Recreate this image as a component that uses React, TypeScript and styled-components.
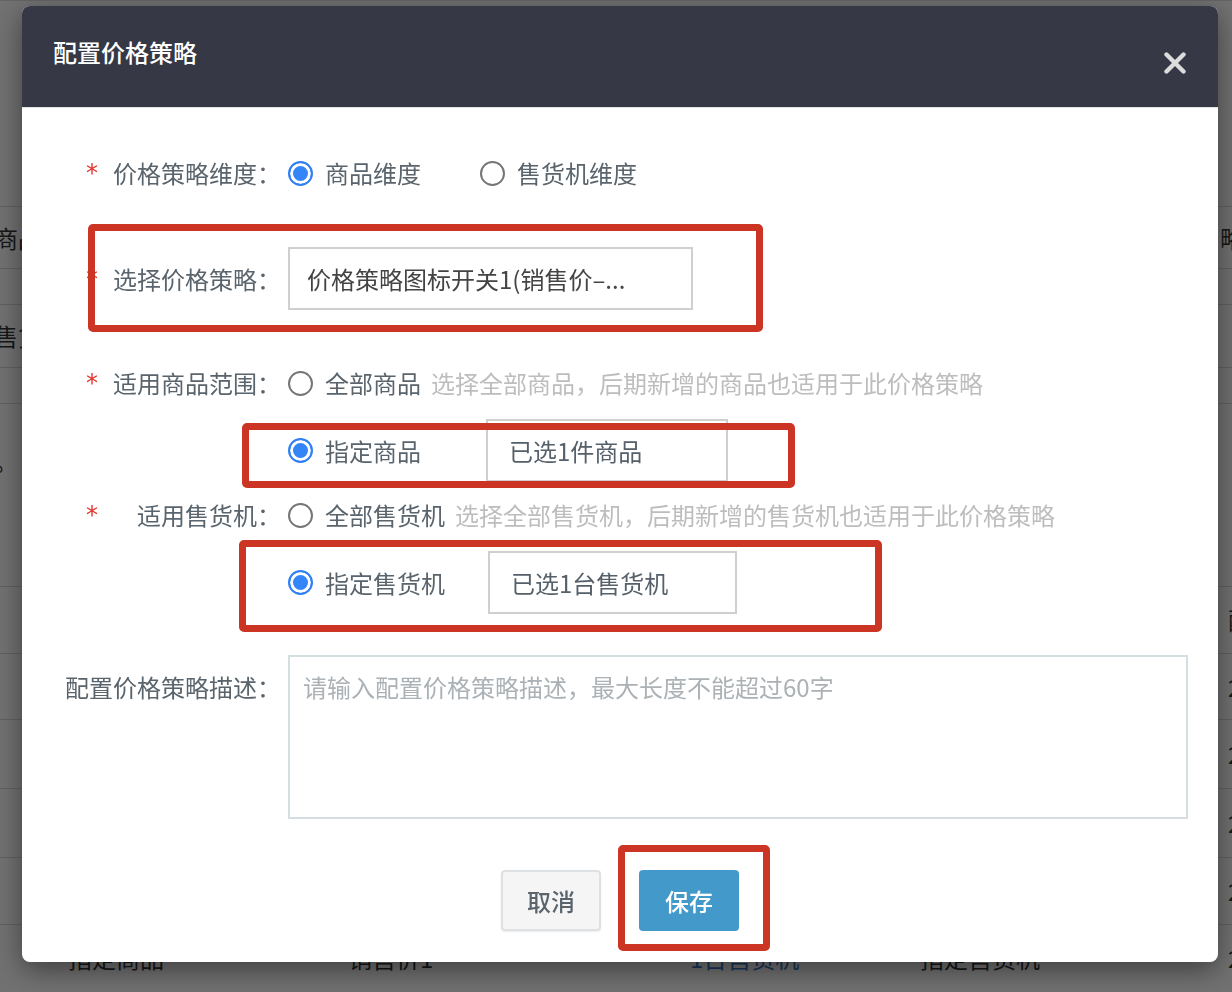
import React from "react";
import styled, { createGlobalStyle } from "styled-components";

interface RowProps {
  top: number
  height: number
  align?: string
}

interface WidthProps {
  width: number
}

interface BoxProps {
  left: number
  top: number
  width: number
  height: number
}

interface RadioProps {
  checked?: boolean
}

const GlobalStyle = createGlobalStyle`
  html, body {
    margin: 0;
    padding: 0;
  }
  body {
    width: 1232px;
    height: 992px;
    overflow: hidden;
    background: #fafafa;
    font-family: "Noto Sans CJK SC", "Noto Sans", sans-serif;
  }
  * {
    box-sizing: border-box;
  }
`;

const BG_ROWS = [
  { height: 62, left: "商品", right: "略" },
  { height: 36 },
  { height: 63, left: "售货" },
  { height: 36 },
  { height: 183, left: "。", top: true },
  { height: 67, tail: "配" },
  { height: 66, tail: "2" },
  { height: 69, tail: "2" },
  { height: 69, tail: "2" },
  { height: 67, tail: "2" },
  { height: 66, cells: ["指定商品", "销售价1", "1台售货机", "指定售货机"], tail: "2" },
];

const App: React.FC = (): React.ReactElement => {
  return (
    <>
      <GlobalStyle />
      <BackPage>
        {BG_ROWS.map((row, i) => (
          <BgRow key={i} height={row.height} top={row.top}>
            <BgLeft>{row.left}</BgLeft>
            {row.cells ? (
              <>
                <BgCell>{row.cells[0]}</BgCell>
                <BgCell>{row.cells[1]}</BgCell>
                <BgLink>{row.cells[2]}</BgLink>
                <BgCell>{row.cells[3]}</BgCell>
              </>
            ) : (
              <>
                <BgCell />
                <BgCell />
                <BgCell />
                <BgCell />
              </>
            )}
            <BgCell>{row.right}</BgCell>
            <BgTail>{row.tail}</BgTail>
          </BgRow>
        ))}
      </BackPage>

      <Overlay>
        <Modal>
          <ModalHeader>
            <ModalTitle>配置价格策略</ModalTitle>
            <CloseButton aria-label="关闭">
              <svg width="22" height="22" viewBox="0 0 22 22">
                <path d="M2.5 2.5 L19.5 19.5 M19.5 2.5 L2.5 19.5" stroke="#dcdcdc" strokeWidth="4.4" strokeLinecap="round" />
              </svg>
            </CloseButton>
          </ModalHeader>

          <ModalBody>
            <FormRow top={40} height={50}>
              <LabelCell>
                <Star>*</Star>
                <LabelText>价格策略维度：</LabelText>
              </LabelCell>
              <Field>
                <RadioOption width={192}>
                  <Radio checked />
                  <OptionText>商品维度</OptionText>
                </RadioOption>
                <RadioOption width={192}>
                  <Radio />
                  <OptionText>售货机维度</OptionText>
                </RadioOption>
              </Field>
            </FormRow>

            <FormRow top={49} height={63}>
              <LabelCell>
                <Star>*</Star>
                <LabelText>选择价格策略：</LabelText>
              </LabelCell>
              <Field>
                <SelectBox width={405}>
                  <SelectValue>价格策略图标开关1(销售价–...</SelectValue>
                </SelectBox>
              </Field>
              <Mark left={66} top={-23} width={675} height={108} />
            </FormRow>

            <FormRow top={48} height={50}>
              <LabelCell>
                <Star>*</Star>
                <LabelText>适用商品范围：</LabelText>
              </LabelCell>
              <Field>
                <RadioOption>
                  <Radio />
                  <OptionText>全部商品</OptionText>
                </RadioOption>
                <Hint>选择全部商品，后期新增的商品也适用于此价格策略</Hint>
              </Field>
            </FormRow>

            <FormRow top={11} height={62}>
              <LabelCell />
              <Field>
                <RadioOption width={198}>
                  <Radio checked />
                  <OptionText>指定商品</OptionText>
                </RadioOption>
                <PickBox width={242}>已选1件商品</PickBox>
              </Field>
              <Mark left={220} top={4} width={553} height={65} />
            </FormRow>

            <FormRow top={9} height={50}>
              <LabelCell>
                <Star>*</Star>
                <LabelText>适用售货机：</LabelText>
              </LabelCell>
              <Field>
                <RadioOption>
                  <Radio />
                  <OptionText>全部售货机</OptionText>
                </RadioOption>
                <Hint>选择全部售货机，后期新增的售货机也适用于此价格策略</Hint>
              </Field>
            </FormRow>

            <FormRow top={11} height={63}>
              <LabelCell />
              <Field>
                <RadioOption width={200}>
                  <Radio checked />
                  <OptionText>指定售货机</OptionText>
                </RadioOption>
                <PickBox width={249}>已选1台售货机</PickBox>
              </Field>
              <Mark left={217} top={-11} width={643} height={92} />
            </FormRow>

            <FormRow top={41} height={164} align="start">
              <LabelCell>
                <LabelText pad>配置价格策略描述：</LabelText>
              </LabelCell>
              <Field>
                <DescArea placeholder="请输入配置价格策略描述，最大长度不能超过60字" />
              </Field>
            </FormRow>

            <Actions>
              <CancelButton>取消</CancelButton>
              <SaveButton>保存</SaveButton>
              <Mark left={596} top={-25} width={152} height={106} />
            </Actions>
          </ModalBody>
        </Modal>
      </Overlay>
    </>
  );
};

const BackPage = styled.div`
  display: flex;
  flex-direction: column;
  padding-top: 205px;
  width: 1232px;
  border-top: 1px solid #ddd;
`;

const BgRow = styled.div<{ height: number; top?: boolean }>`
  display: grid;
  grid-template-columns: 68px 280px 342px 230px 300px 8px 1fr;
  align-items: ${({ top }) => (top ? "start" : "center")};
  height: ${({ height }) => height}px;
  padding-top: ${({ top }) => (top ? "42px" : "0")};
  border-top: 1px solid #d4d4d4;
  font-size: 24px;
  line-height: 30px;
  color: #333;
  white-space: nowrap;
`;

const BgLeft = styled.div`
  margin-left: -6px;
`;

const BgCell = styled.div``;

const BgLink = styled.div`
  color: #3c78c8;
`;

const BgTail = styled.div`
  padding-left: 0;
`;

const Overlay = styled.div`
  position: fixed;
  inset: 0;
  display: flex;
  align-items: flex-start;
  padding: 6px 0 0 22px;
  background: rgba(0, 0, 0, 0.55);
`;

const Modal = styled.div`
  display: flex;
  flex-direction: column;
  width: 1196px;
  height: 956px;
  border-radius: 8px;
  overflow: hidden;
  background: #fff;
  box-shadow: 0 8px 28px rgba(0, 0, 0, 0.45);
`;

const ModalHeader = styled.div`
  display: flex;
  justify-content: space-between;
  align-items: flex-start;
  height: 102px;
  padding: 0 32px 0 31px;
  background: #363846;
  border-bottom: 1px solid #e4e4e4;
`;

const ModalTitle = styled.h2`
  margin: 31px 0 0;
  font-size: 24px;
  line-height: 30px;
  font-weight: 500;
  color: #fff;
`;

const CloseButton = styled.button`
  display: flex;
  margin-top: 46px;
  padding: 0;
  border: none;
  background: none;
  cursor: pointer;
`;

const ModalBody = styled.div`
  display: flex;
  flex-direction: column;
`;

const FormRow = styled.div<RowProps>`
  position: relative;
  display: grid;
  grid-template-columns: 259px 1fr;
  column-gap: 7px;
  align-items: ${({ align }) => align || "center"};
  height: ${({ height }) => height}px;
  margin-top: ${({ top }) => top}px;
`;

const LabelCell = styled.div`
  display: flex;
  align-items: center;
`;

const Star = styled.span`
  margin: 0 0 0 64px;
  font-family: "DejaVu Sans", sans-serif;
  font-size: 24px;
  line-height: 30px;
  color: #e5332a;
`;

const LabelText = styled.span<{ pad?: boolean }>`
  margin-left: auto;
  padding-top: ${({ pad }) => (pad ? "16px" : "0")};
  font-size: 24px;
  line-height: 32px;
  color: #5a646c;
  white-space: nowrap;
`;

const Field = styled.div`
  display: flex;
  align-items: center;
  height: 100%;
`;

const RadioOption = styled.label<Partial<WidthProps>>`
  display: flex;
  align-items: center;
  gap: 12px;
  width: ${({ width }) => (width ? `${width}px` : "auto")};
  flex-shrink: 0;
  cursor: pointer;
`;

const Radio = styled.span<RadioProps>`
  width: 25px;
  height: 25px;
  border-radius: 50%;
  border: 2px solid ${({ checked }) => (checked ? "#2f7ff5" : "#767676")};
  background: ${({ checked }) => (checked ? "#3485f7" : "#fff")};
  box-shadow: inset 0 0 0 3px #fff;
`;

const OptionText = styled.span`
  font-size: 24px;
  line-height: 32px;
  color: #5a646c;
  white-space: nowrap;
`;

const Hint = styled.span`
  margin-left: 10px;
  font-size: 24px;
  line-height: 32px;
  color: #bdbdbd;
  white-space: nowrap;
`;

const SelectBox = styled.div<WidthProps>`
  display: flex;
  align-items: center;
  width: ${({ width }) => width}px;
  height: 63px;
  padding-left: 17px;
  border: 2px solid #cfcfcf;
`;

const SelectValue = styled.span`
  font-size: 24px;
  line-height: 32px;
  color: #444;
  white-space: nowrap;
`;

const PickBox = styled.div<WidthProps>`
  display: flex;
  align-items: center;
  width: ${({ width }) => width}px;
  height: 63px;
  padding-left: 21px;
  border: 2px solid #cfcfcf;
  font-size: 24px;
  line-height: 32px;
  color: #56606a;
  white-space: nowrap;
`;

const DescArea = styled.textarea`
  width: 900px;
  height: 164px;
  padding: 14px 13px;
  border: 2px solid #d5dee1;
  font-family: inherit;
  font-size: 24px;
  line-height: 32px;
  color: #444;
  resize: none;
  outline: none;

  &::placeholder {
    color: #abb1b5;
  }
`;

const Actions = styled.div`
  position: relative;
  display: flex;
  justify-content: center;
  gap: 38px;
  margin-top: 51px;
`;

const BaseButton = styled.button`
  width: 100px;
  height: 61px;
  border-radius: 4px;
  font-family: inherit;
  font-size: 24px;
  font-weight: 500;
  cursor: pointer;
`;

const CancelButton = styled(BaseButton)`
  border: 2px solid #dde1e3;
  background: #f5f5f5;
  color: #5a646c;
  box-shadow: 0 1px 2px rgba(0, 0, 0, 0.08);
`;

const SaveButton = styled(BaseButton)`
  border: none;
  background: #4499cb;
  color: #fff;
`;

const Mark = styled.div<BoxProps>`
  position: absolute;
  left: ${({ left }) => left}px;
  top: ${({ top }) => top}px;
  width: ${({ width }) => width}px;
  height: ${({ height }) => height}px;
  border: 7px solid #cc3524;
  border-radius: 5px;
  pointer-events: none;
`;

export default App;
